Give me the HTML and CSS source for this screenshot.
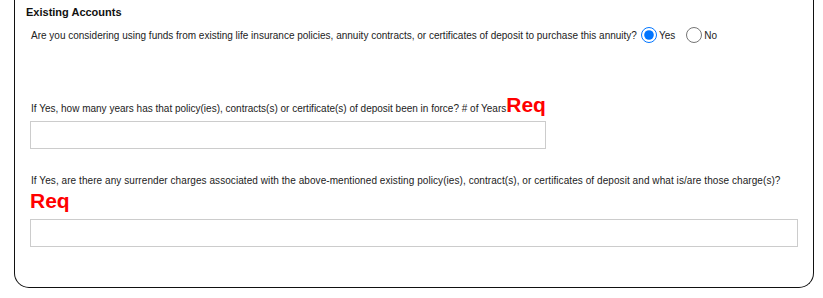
FILE: index.html
```html
<!DOCTYPE html>
<html lang="en">
<head>
    <meta charset="UTF-8">
    <meta name="viewport" content="width=device-width, initial-scale=1.0">
    <title>Existing Accounts</title>
    <link rel="stylesheet" href="styles.css">
</head>
<body>
    <section class="card">
        <h4 class="section_title">Existing Accounts</h4>
        <div class="question">
            <span class="question_text">Are you considering using funds from existing life insurance policies, annuity contracts, or certificates of deposit to purchase this annuity?</span>
            <label class="radio_option">
                <input type="radio" name="replace" checked>
                <span>Yes</span>
            </label>
            <label class="radio_option">
                <input type="radio" name="replace">
                <span>No</span>
            </label>
        </div>
        <div class="field field_years">
            <label class="field_label">If Yes, how many years has that policy(ies), contracts(s) or certificate(s) of deposit been in force? # of Years<span class="req">Req</span></label>
            <input type="text" class="text_input short">
        </div>
        <div class="field field_charges">
            <label class="field_label">If Yes, are there any surrender charges associated with the above-mentioned existing policy(ies), contract(s), or certificates of deposit and what is/are those charge(s)?</label>
            <span class="req block">Req</span>
            <input type="text" class="text_input wide">
        </div>
    </section>
</body>
</html>
```

FILE: styles.css
```css
* {
    margin: 0;
    padding: 0;
    box-sizing: border-box;
    font-family: "Liberation Sans", Arial, sans-serif;
}
body {
    background: #fff;
    color: #222;
}
.card {
    margin-left: 14px;
    width: 800px;
    height: 288px;
    border: 1px solid #111;
    border-top: none;
    border-radius: 0 0 15px 15px;
    padding: 5px 15px 0 15px;
}
.section_title {
    font-size: 11px;
    font-weight: bold;
    color: #111;
    margin-left: -4px;
    line-height: 14px;
}
.question {
    display: flex;
    align-items: center;
    margin-top: 8px;
    font-size: 10px;
    color: #222;
    padding-left: 1px;
}
.radio_option {
    display: flex;
    align-items: center;
    margin-left: 4px;
    margin-right: 7px;
}
.radio_option input {
    width: 16px;
    height: 16px;
    margin: 0 2px 0 0;
    accent-color: #0075ff;
}
.field {
    margin-top: 51px;
}
.field_label {
    display: block;
    font-size: 10px;
    line-height: 22px;
    color: #222;
    padding-left: 1px;
}
.field_charges .field_label {
    letter-spacing: 0.07px;
}
.req {
    color: #ff0000;
    font-size: 21px;
    font-weight: bold;
    line-height: 22px;
    letter-spacing: 0;
}
.req.block {
    display: block;
    margin: -1px 0 8px;
    line-height: 20px;
}
.text_input {
    display: block;
    height: 28px;
    border: 1px solid #ccc;
}
.text_input.short {
    width: 516px;
    margin-top: 1px;
}
.text_input.wide {
    width: 768px;
}
.field_charges {
    margin-top: 21px;
}
```
